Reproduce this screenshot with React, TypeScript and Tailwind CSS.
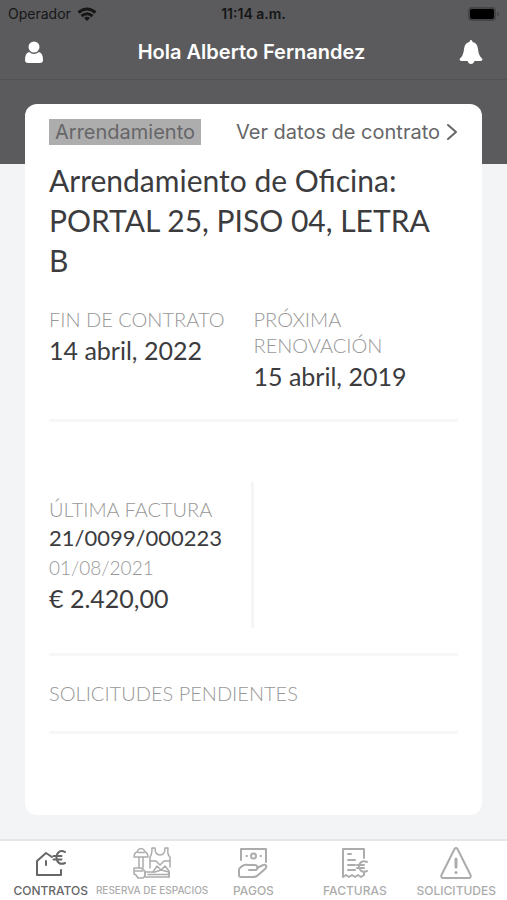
import React, { useState } from "react";

const iconProps = {
  fill: "none",
  stroke: "currentColor",
  strokeWidth: 2,
  strokeLinecap: "round" as const,
  strokeLinejoin: "round" as const,
  "aria-hidden": true,
};

const HouseEuroIcon = () => (
  <svg width="32" height="28" viewBox="0 0 32 28" {...iconProps}>
    <path d="M17 8 11 4 2 12v14h24v-5" />
    <path d="M11 12v4" />
    <path d="M30 3c-5-3-8.500 1-8.500 5.500s3.500 8 8.500 5.500M18.500 7h8M18.500 10.500h8" />
  </svg>
);

const GymIcon = () => (
  <svg width="38" height="34" viewBox="0 0 38 34" {...iconProps} strokeWidth={1.5}>
    <path d="M5 4q3-3 6 0l1 2q3 1 3 5H1q0-4 3-5zM6 11v11M10 11v11M1 22h7l4 3v5l-2 2H5l-2-3-2-1z" />
    <path d="M5 6.500h6M2 25h8" />
    <path d="M19 2h3q0 7 5 7t5-7h3q-1 7 2 9v10M19 2q0 7-2 9v11" />
    <path d="M17 15h6l4 4 4-4h6M20 26l4-6 4 4 4-4 4 5v6" />
    <path d="M12 26h10l6-2 8 2v5H12zM15 28.500h20" />
  </svg>
);

const PaymentIcon = () => (
  <svg width="32" height="32" viewBox="0 0 32 32" {...iconProps}>
    <path d="M4 13V2h25v13" />
    <circle cx="16.500" cy="9" r="2.500" />
    <path d="M9.500 9h.5M23.500 9h.5" />
    <path d="M12 23h7q2-1 1.500-3t-3-2H11q-5-1-9 4v6q0 2 2 2h12q2 0 4-1l8-7q2-2 1-3.500t-4 0L20 21" />
  </svg>
);

const InvoiceIcon = () => (
  <svg width="30" height="32" viewBox="0 0 30 32" {...iconProps}>
    <path d="M24 11V2H3v28l3-2 3 2 3-2 3 2 3-2 3 2 3-2v-3" />
    <path d="M8 7h3M8 13h7M8 18h7M8 23h7" />
    <path d="M27 15c-5-2-8 1-8 4.500s3 6.500 8 4.500M17 18h7M17 21h7" />
  </svg>
);

const WarningIcon = () => (
  <svg width="34" height="34" viewBox="0 0 34 34" {...iconProps}>
    <path d="M15.500 3Q17 1 18.500 3l13 26q1 3-2 3h-25q-3 0-2-3z" />
    <path d="M17 13v8" strokeWidth={3} />
    <path d="M17 26.500v.1" strokeWidth={3} />
  </svg>
);

const tabs = [
  { label: "CONTRATOS", Icon: HouseEuroIcon, size: "text-xs" },
  { label: "RESERVA DE ESPACIOS", Icon: GymIcon, size: "text-[10px]" },
  { label: "PAGOS", Icon: PaymentIcon, size: "text-xs" },
  { label: "FACTURAS", Icon: InvoiceIcon, size: "text-xs" },
  { label: "SOLICITUDES", Icon: WarningIcon, size: "text-xs" },
];

const StatusBar = () => (
  <div className="grid h-7 grid-cols-3 items-center px-2 text-sm text-[#161617]">
    <div className="flex items-center gap-1.5">
      <span>Operador</span>
      <svg width="20" height="14" viewBox="0 0 20 14" fill="none" stroke="currentColor" strokeWidth="3" aria-hidden>
        <path d="M1.500 5.500q8.500-7 17 0M4.500 9q5.500-4.500 11 0" />
        <path d="m10 14-3-3q3-2.500 6 0z" fill="currentColor" stroke="none" />
      </svg>
    </div>
    <span className="text-center text-sm font-semibold">11:14 a.m.</span>
    <div className="flex items-center justify-end gap-px">
      <div className="h-3.5 w-7 rounded border-2 border-[#454547] bg-black" />
      <div className="h-1 w-0.5 rounded-r bg-[#454547]" />
    </div>
  </div>
);

const Label = ({ children }: { children: React.ReactNode }) => (
  <p className="text-[20px] leading-[26px] font-light text-[#979797]">{children}</p>
);

const ContractCard = () => (
  <section className="mx-[25px] -mt-[60px] rounded-xl bg-white px-6 pt-[15px] pb-[81px]">
    <div className="flex items-center justify-between font-[Inter,sans-serif] text-[20px] leading-[26px] text-[#666668]">
      <span className="bg-[#adadad] px-1.5">Arrendamiento</span>
      <a href="#contrato" className="flex items-center gap-1.5">
        Ver datos de contrato
        <svg width="12" height="18" viewBox="0 0 12 18" {...iconProps}>
          <path d="m2 2 8 7-8 7" />
        </svg>
      </a>
    </div>

    <h2 className="mt-[15px] pr-4 text-[30px] leading-10">
      Arrendamiento de Oficina: PORTAL 25, PISO 04, LETRA B
    </h2>

    <div className="mt-[26px] grid grid-cols-2 pb-[25px]">
      <div>
        <Label>FIN DE CONTRATO</Label>
        <p className="text-[25px] leading-9">14 abril, 2022</p>
      </div>
      <div>
        <Label>
          PRÓXIMA
          <br />
          RENOVACIÓN
        </Label>
        <p className="text-[25px] leading-9">15 abril, 2019</p>
      </div>
    </div>

    <div className="border-y-3 border-[#f7f7f8] pt-[60px] pb-[25px]">
      <div className="grid grid-cols-2">
        <div className="border-r-3 border-[#f5f5f6] py-3.5">
          <Label>ÚLTIMA FACTURA</Label>
          <p className="text-[22px] leading-8">21/0099/000223</p>
          <p className="text-[19px] leading-7 font-light text-[#979797]">01/08/2021</p>
          <p className="text-[25px] leading-8">€ 2.420,00</p>
        </div>
      </div>
    </div>

    <div className="border-b-3 border-[#f7f7f8] pt-6 pb-[25px]">
      <Label>SOLICITUDES PENDIENTES</Label>
    </div>
  </section>
);

const App: React.FC = () => {
  const [active, setActive] = useState("CONTRATOS");

  return (
    <div className="flex min-h-screen flex-col bg-[#f3f4f6] font-[Inter,sans-serif]">
      <header className="bg-[#5b5b5d]">
        <StatusBar />
        <div className="flex h-13 items-center justify-between border-b border-[#535355] px-6 pb-1">
          <button type="button" aria-label="Perfil" className="text-white">
            <svg width="20" height="24" viewBox="0 0 20 24" fill="currentColor" aria-hidden>
              <circle cx="10" cy="7" r="5.500" />
              <path d="M5 12q5 4 10 0 4 1 4 8 0 3-3 3H4q-3 0-3-3 0-7 4-8z" />
            </svg>
          </button>
          <h1 className="text-[20px] font-semibold text-white">Hola Alberto Fernandez</h1>
          <button type="button" aria-label="Notificaciones" className="text-white">
            <svg width="24" height="26" viewBox="0 0 24 26" fill="currentColor" aria-hidden>
              <path d="M12 1q1.500 0 1.500 2 5 1 5.500 7 .5 7 4.500 10 0 2-2 2h-6q-1 3-3.500 3t-3.500-3h-6q-2 0-2-2 4-3 4.500-10 .5-6 5.500-7 0-2 1.500-2z" />
            </svg>
          </button>
        </div>
      </header>

      <main className="flex-1 pb-6 font-[Lato,sans-serif] text-[#3c3c3e]">
        <div className="h-[84px] bg-[#5b5b5d]" />
        <ContractCard />
      </main>

      <nav className="grid grid-cols-5 border-t-2 border-[#e6e6e8] bg-white">
        {tabs.map(({ label, Icon, size }) => (
          <button
            key={label}
            type="button"
            onClick={() => setActive(label)}
            className={`flex min-w-0 flex-col items-center ${
              active === label ? "text-[#666668]" : "text-[#acacac]"
            }`}
          >
            <span className="flex h-10 items-center pt-1">
              <Icon />
            </span>
            <span className={`flex h-[19px] items-center whitespace-nowrap font-medium ${size}`}>
              {label}
            </span>
          </button>
        ))}
      </nav>
    </div>
  );
};

export default App;
